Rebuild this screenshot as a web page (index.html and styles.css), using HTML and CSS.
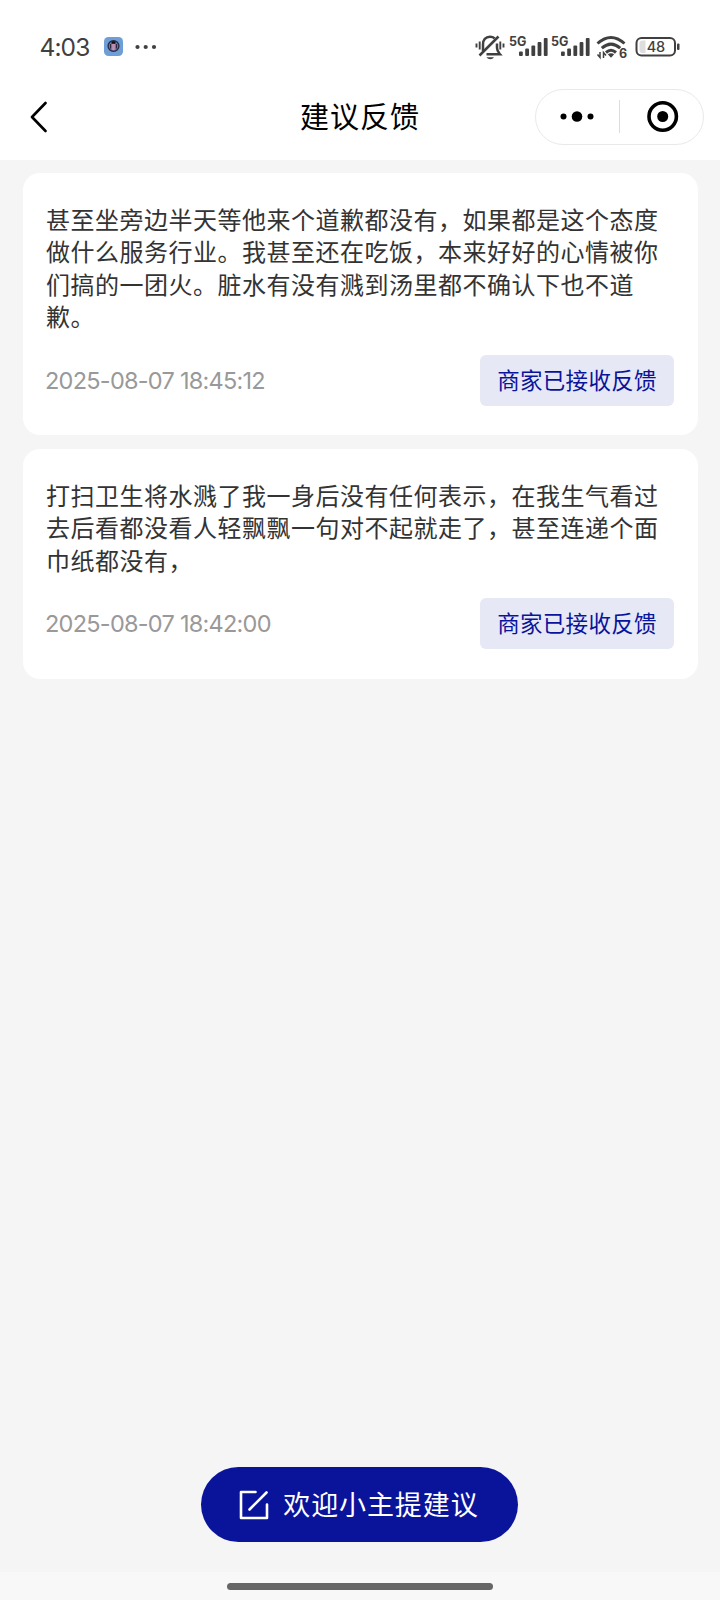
FILE: index.html
```html
<!DOCTYPE html>
<html lang="zh-CN">
<head>
<meta charset="utf-8">
<title>建议反馈</title>
<link rel="stylesheet" href="styles.css">
</head>
<body>
<div class="screen">
  <header class="top">
    <div class="status">
      <span class="clock">4:03</span>
      <svg class="app-badge" width="19" height="19" viewBox="0 0 19 19"><rect width="19" height="19" rx="4.5" fill="#6d9fd6"/><circle cx="9.5" cy="9" r="5.4" fill="#6f7fb0" stroke="#2c2b45" stroke-width="1.400"/><path d="M6.500 7v4.500M12.500 7v4.500" stroke="#2c2b45" stroke-width="1.200"/><path d="M9.500 7v6" stroke="#c98fb0" stroke-width="2.600"/><path d="M7.500 5.500h4" stroke="#111" stroke-width="2.500"/></svg>
      <svg class="more" width="22" height="6" viewBox="0 0 22 6" fill="#404040"><circle cx="2.500" cy="3" r="2.100"/><circle cx="10.700" cy="3" r="2.100"/><circle cx="19" cy="3" r="2.100"/></svg>
      <svg class="indicators" width="210" height="30" viewBox="0 0 210 30" fill="none" stroke="#404040">
        <g>
          <path d="M1.500 8.500v4M4.700 6.500v8M28.500 8.500v4M25.300 6.500v8" stroke-width="1.900"/>
          <path d="M8 16V9.500C8 5 10.500 1.700 15 1.700c2 0 3.500.6 4.700 1.700M22 8.500V13c0 3 1 4 3 6.300H11.500" stroke-width="2.500"/>
          <path d="M4.500 20.500L23.500 1.500" stroke-width="2.500"/>
          <path d="M11.500 22.300h7.500c-1.500 2.600-6 2.600-7.500 0z" fill="#404040" stroke="none"/>
        </g>
        <g fill="#404040" stroke="none">
          <text class="net" x="34" y="10.500">5G</text>
          <text class="net" x="76" y="10.500">5G</text>
          <g id="bars"><rect x="44" y="16.500" width="3.800" height="4.500" rx="1"/><rect x="50.200" y="13.500" width="3.800" height="7.500" rx="1"/><rect x="56.400" y="10.500" width="3.800" height="10.500" rx="1"/><rect x="62.600" y="7" width="3.800" height="14" rx="1"/><rect x="68.800" y="3" width="3.800" height="18" rx="1"/></g>
          <use href="#bars" x="42"/>
        </g>
        <g stroke-width="3">
          <path d="M122.500 8.500q13.500-12 27 0M126.800 13.200q9.200-8.200 18.400 0M131 17.500q5-4.400 10 0"/>
          <path d="M132.800 19.200q3.200-2 6.400 0L136 22.800z" fill="#404040" stroke="none"/>
          <path d="M125 17v5.500l-2.500-3M128.500 23v-5.500l2.500 3" stroke-width="1.500"/>
        </g>
        <text class="net" x="144" y="23" fill="#404040" stroke="none">6</text>
        <rect x="161.500" y="3" width="38.500" height="17.500" rx="5" stroke-width="2"/>
        <path d="M167.500 5.500h3v12.500h-3q-3 0-3-3v-6.500q0-3 3-3z" fill="#dedede" stroke="none"/>
        <rect x="202" y="8.500" width="2.500" height="6.500" rx="1" fill="#404040" stroke="none"/>
        <text class="pct" x="180.700" y="17" fill="#404040" stroke="none">48</text>
      </svg>
    </div>
    <nav class="nav">
      <svg class="back" width="18" height="32" viewBox="0 0 18 32"><path d="M16.500 2L3 16l13.500 14" fill="none" stroke="#000" stroke-width="2.600" stroke-linecap="round" stroke-linejoin="round"/></svg>
      <h1 class="title">建议反馈</h1>
      <div class="capsule">
        <svg width="168" height="55" viewBox="0 0 168 55"><circle cx="28.500" cy="27.500" r="3"/><circle cx="42" cy="27.500" r="5.300"/><circle cx="55.500" cy="27.500" r="3"/><path d="M84.500 11v33" stroke="#dcdcdc" stroke-width="1"/><circle cx="127.700" cy="27.500" r="13.700" fill="none" stroke="#000" stroke-width="3.600"/><circle cx="127.700" cy="27.500" r="5.500"/></svg>
      </div>
    </nav>
  </header>
  <main class="list">
    <article class="card">
      <p class="body">甚至坐旁边半天等他来个道歉都没有，如果都是这个态度<br>做什么服务行业。我甚至还在吃饭，本来好好的心情被你<br>们搞的一团火。脏水有没有溅到汤里都不确认下也不道<br>歉。</p>
      <div class="meta"><time>2025-08-07 18:45:12</time><span class="tag">商家已接收反馈</span></div>
    </article>
    <article class="card">
      <p class="body">打扫卫生将水溅了我一身后没有任何表示，在我生气看过<br>去后看都没看人轻飘飘一句对不起就走了，甚至连递个面<br>巾纸都没有，</p>
      <div class="meta"><time>2025-08-07 18:42:00</time><span class="tag">商家已接收反馈</span></div>
    </article>
  </main>
  <button class="submit">
    <svg width="30" height="30" viewBox="0 0 30 30" fill="none" stroke="#fff" stroke-width="2.600" stroke-linecap="round" stroke-linejoin="round"><path d="M16.500 2H2v26h26V14.500M10.500 19.500L27.500 2.500"/></svg>
    <span>欢迎小主提建议</span>
  </button>
  <footer class="gesture"><i></i></footer>
</div>
</body>
</html>
```
FILE: styles.css
```css
* { box-sizing: border-box; }
body { margin: 0; }
.screen {
  width: 720px;
  height: 1600px;
  display: flex;
  flex-direction: column;
  background: #f5f5f5;
  font-family: Inter, "Noto Sans CJK SC", sans-serif;
}
.top { height: 159.5px; background: #fff; }
.status { height: 80px; padding: 34px 35px 0 39.5px; display: flex; align-items: flex-start; }
.clock { width: 50px; font-size: 24.5px; line-height: 27px; font-weight: 430; letter-spacing: -0.9px; color: #404040; white-space: nowrap; }
.app-badge { margin: 3px 0 0 14.5px; }
.more { margin: 9.5px 0 0 11.5px; }
.indicators { margin: 1px 0 0 auto; }
.net { font: 700 12.5px Inter, sans-serif; letter-spacing: 0; }
.pct { font: 500 14.5px Inter, sans-serif; text-anchor: middle; letter-spacing: -0.3px; }
.nav { height: 79.5px; padding: 0 17px 0 29px; display: grid; grid-template-columns: 168px 1fr 168px; align-items: start; }
.back { margin-top: 20.5px; }
.title { margin: 16.5px 0 0 -12px; text-align: center; font-size: 29px; line-height: 42px; font-weight: 400; letter-spacing: 1px; color: #000; }
.capsule { margin-top: 8.5px; height: 56px; width: 169px; border: 1px solid #e9e9e9; border-radius: 28px; }
.capsule svg { display: block; margin: -0.5px -1px; }
.list { flex: 1; padding: 13.5px 22.5px 0 23px; display: flex; flex-direction: column; gap: 14px; }
.card { padding: 31.5px 23.5px 29.2px 23px; border-radius: 17px; background: #fff; }
.body { margin: 0; font-size: 24px; line-height: 32.6px; letter-spacing: 0.5px; color: #333; white-space: nowrap; }
.meta { margin-top: 19.7px; display: flex; justify-content: space-between; align-items: center; }
.meta time { margin: 1.5px 0 0 -1px; font-size: 23.5px; line-height: 30px; font-weight: 370; letter-spacing: -0.74px; color: #999; }
.tag { width: 194px; height: 51.3px; border-radius: 6px; background: #e6e8f5; color: #0a149b; font-size: 22.5px; line-height: 51.3px; letter-spacing: 0.3px; text-align: center; }
.submit { align-self: center; flex: none; width: 317px; height: 75px; margin: 0 0.5px 30px 0; padding: 0 0 0 38px; border: 0; border-radius: 38px; background: #0a149b; color: #fff; display: flex; align-items: center; gap: 14px; font: 400 27px "Noto Sans CJK SC", sans-serif; letter-spacing: 0.9px; }
.submit span { margin-top: -2px; }
.gesture { flex: none; height: 28px; padding-top: 11px; background: #f8f8f8; }
.gesture i { display: block; width: 266px; height: 6.5px; margin: 0 auto; border-radius: 4px; background: #666; }
```
